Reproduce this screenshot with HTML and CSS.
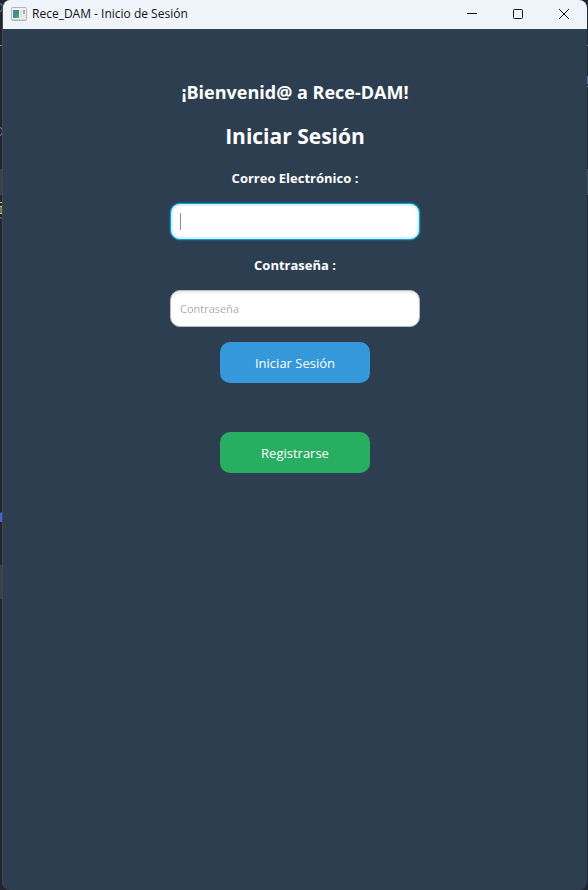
FILE: index.html
```html
<!DOCTYPE html>
<html lang="es">
<head>
<meta charset="utf-8">
<title>Rece_DAM - Inicio de Sesión</title>
<link rel="stylesheet" href="styles.css">
</head>
<body>
<svg class="backdrop" aria-hidden="true">
  <rect x="0" y="169" width="3" height="26" fill="#3c404d"/>
  <rect x="0" y="565" width="3" height="34" fill="#3c404d"/>
  <path d="M0 3.500Q2.500 3.500 2.500 7.500Q2.500 11.500 0 11.500" fill="none" stroke="#4d9bb0"/>
  <path d="M0 45.500H3" stroke="#8087a8"/>
  <path d="M0 127.500Q2.500 127.500 2.500 131.500Q2.500 135.500 0 135.500" fill="none" stroke="#7487d8"/>
  <path d="M0 202.500H2M0 206.500H2M1 206V214M0 213.500H3" stroke="#c9cf6e"/>
  <path d="M0 217.500L1.500 218.500L3 217.500" fill="none" stroke="#62a58c"/>
  <path d="M0 513.500H3M0 517.500H2M1 513V522" stroke="#4761d8" stroke-width="2"/>
</svg>
<svg class="backdrop backdrop-right" aria-hidden="true">
  <path d="M0 45.500H3M0 86.500H3" stroke="#7f8791"/>
  <rect x="0" y="76" width="3" height="8" fill="#5c70a8"/>
  <rect x="0" y="169" width="3" height="26" fill="#3f4c62"/>
</svg>
<div class="window">
  <header class="titlebar">
    <svg class="app-icon" width="16" height="14" viewBox="0 0 16 14" aria-hidden="true">
      <defs>
        <linearGradient id="pane" x1="0" y1="0" x2="1" y2="1">
          <stop offset="0" stop-color="#5586b8"/><stop offset=".55" stop-color="#3f8c8a"/><stop offset="1" stop-color="#62b56a"/>
        </linearGradient>
      </defs>
      <rect x=".5" y=".5" width="15" height="13" rx="1" fill="#f1f1ef" stroke="#b2b5b8"/>
      <rect x="2" y="3" width="6" height="8" fill="url(#pane)"/>
      <rect x="9" y="3" width="2" height="8" fill="#e2e0da"/>
      <rect x="12" y="3" width="2" height="4" fill="#8fb9a4"/>
      <rect x="12" y="8" width="2" height="3" fill="#e6e4df"/>
      <path d="M1 12.500H15" stroke="#cfd1d3"/>
    </svg>
    <span class="title">Rece_DAM - Inicio de Sesión</span>
    <div class="controls">
      <button type="button" aria-label="Minimizar"><svg width="12" height="12" viewBox="0 0 12 12"><path d="M1 5.500H11"/></svg></button>
      <button type="button" aria-label="Maximizar"><svg width="12" height="12" viewBox="0 0 12 12"><rect x="1.500" y="1.500" width="9" height="9" rx="1"/></svg></button>
      <button type="button" aria-label="Cerrar"><svg width="12" height="12" viewBox="0 0 12 12"><path d="M1 1L11 11M11 1L1 11"/></svg></button>
    </div>
  </header>
  <main>
    <form class="login">
      <p class="welcome">¡Bienvenid@ a Rece-DAM!</p>
      <h1>Iniciar Sesión</h1>
      <label for="email">Correo Electrónico :</label>
      <div class="field">
        <input id="email" type="text" autofocus>
        <span class="caret"></span>
      </div>
      <label for="password">Contraseña :</label>
      <div class="field">
        <input id="password" type="password" placeholder="Contraseña">
      </div>
      <button class="action primary" type="button">Iniciar Sesión</button>
      <button class="action register" type="button">Registrarse</button>
    </form>
  </main>
</div>
<script src="script.js"></script>
</body>
</html>
```
FILE: styles.css
```css
* { box-sizing: border-box; }

body {
  margin: 0;
  background: #22242e;
  font-family: "Open Sans", "Noto Sans", sans-serif;
}

.backdrop {
  position: absolute;
  top: 0;
  left: 0;
  width: 3px;
  height: 100vh;
}

.backdrop-right {
  left: auto;
  right: 0;
}

.window {
  position: relative;
  display: flex;
  flex-direction: column;
  min-height: 100vh;
  margin: 0 1px 0 2px;
  border-left: 1px solid #44464d;
  border-radius: 8px;
  overflow: hidden;
  background: #2c3e50;
}

.titlebar {
  display: flex;
  align-items: center;
  height: 29px;
  padding: 0 0 2px 8px;
  background: #eff4fb;
  color: #111;
}

.title {
  margin-left: 5px;
  font-size: 12px;
  line-height: 16px;
}

.controls {
  display: flex;
  margin-left: auto;
}

.controls button {
  display: grid;
  place-items: center;
  width: 46px;
  height: 26px;
  padding: 0;
  border: 0;
  background: none;
}

.controls svg {
  fill: none;
  stroke: #111;
}

.login {
  display: flex;
  flex-direction: column;
  align-items: center;
  padding-top: 50px;
  color: #fff;
}

.welcome,
h1 {
  margin: 0;
  font-weight: 700;
}

.welcome {
  font-size: 18px;
  line-height: 26px;
}

h1 {
  margin: 15px 0;
  font-size: 21px;
  line-height: 33px;
}

label {
  font-size: 13px;
  font-weight: 700;
  line-height: 20px;
}

.field {
  position: relative;
  display: flex;
  width: 250px;
  margin: 15px 0;
}

input {
  width: 100%;
  height: 37px;
  padding: 0 9px;
  border: 1px solid #b9bbbd;
  border-radius: 10px;
  outline: 0;
  background: #fff;
  box-shadow: inset 0 2px 2px #ededed;
  color: #333;
  caret-color: transparent;
  font: 11px/18px "Open Sans", "Noto Sans", sans-serif;
}

input::placeholder {
  color: #b0a9a9;
  opacity: 1;
}

input:focus {
  border-color: #039ed3;
  box-shadow: 0 0 2px #039ed3, inset 0 0 0 2px #d9f0f8;
}

.caret {
  position: absolute;
  top: 10px;
  left: 10px;
  width: 1px;
  height: 17px;
  background: #8c8c8c;
}

.action {
  width: 150px;
  height: 41px;
  border: 0;
  border-radius: 10px;
  color: #fff;
  font: 13px/20px "Open Sans", "Noto Sans", sans-serif;
}

.primary { background: #3498db; }

.register {
  margin-top: 49px;
  background: #27ae60;
}
```
FILE: script.js
```js
document.getElementById("email").focus();
```
